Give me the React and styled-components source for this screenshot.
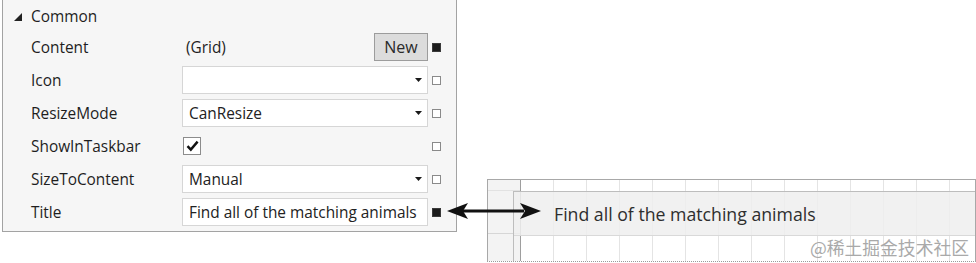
import React from "react";
import styled, { createGlobalStyle } from "styled-components";

const GlobalStyle = createGlobalStyle`
  html, body {
    margin: 0;
    background: #ffffff;
  }
  body {
    font-family: "Open Sans", "Noto Sans", sans-serif;
    color: #1e1e1e;
  }
`;

const properties = [
  { name: "Content", kind: "new", value: "(Grid)", set: true },
  { name: "Icon", kind: "select", value: "", set: false },
  { name: "ResizeMode", kind: "select", value: "CanResize", set: false },
  { name: "ShowInTaskbar", kind: "check", value: true, set: false },
  { name: "SizeToContent", kind: "select", value: "Manual", set: false },
  { name: "Title", kind: "text", value: "Find all of the matching animals", set: true },
];

function DropArrow() {
  return (
    <svg width="7" height="4" viewBox="0 0 7 4">
      <path d="M0 0 H7 L3.5 4 Z" fill="#1a1a1a" />
    </svg>
  );
}

function CheckMark() {
  return (
    <svg width="13" height="12" viewBox="0 0 13 12">
      <path d="M1.5 6.2 L4.8 9.6 L11.6 1.6" fill="none" stroke="#111" strokeWidth="2.4" />
    </svg>
  );
}

function DoubleArrow() {
  return (
    <svg width="100" height="20" viewBox="0 0 100 20">
      <rect x="18" y="8.5" width="62" height="3" fill="#111" />
      <path d="M3 10 L24 2 L19 10 L24 18 Z" fill="#111" />
      <path d="M97 10 L76 2 L81 10 L76 18 Z" fill="#111" />
    </svg>
  );
}

function PropertyValue({ prop }) {
  if (prop.kind === "new") {
    return (
      <ValueLine>
        <PlainValue>{prop.value}</PlainValue>
        <NewButton>New</NewButton>
      </ValueLine>
    );
  }
  if (prop.kind === "check") {
    return (
      <ValueLine>
        <CheckBox>{prop.value && <CheckMark />}</CheckBox>
      </ValueLine>
    );
  }
  return (
    <InputBox>
      <InputText>{prop.value}</InputText>
      {prop.kind === "select" && <DropArrow />}
    </InputBox>
  );
}

export default function App() {
  return (
    <Page>
      <GlobalStyle />
      <PropertyPanel>
        <Header>
          <Collapse />
          Common
        </Header>
        <Rows>
          {properties.map(prop => (
            <Row key={prop.name}>
              <Label>{prop.name}</Label>
              <PropertyValue prop={prop} />
              <Marker $set={prop.set} />
            </Row>
          ))}
        </Rows>
      </PropertyPanel>
      <Canvas>
        <Ruler />
        <Surface />
        <WindowFrame>
          <TitleBar>Find all of the matching animals</TitleBar>
        </WindowFrame>
        <Watermark>@稀土掘金技术社区</Watermark>
      </Canvas>
      <ArrowOverlay>
        <DoubleArrow />
      </ArrowOverlay>
    </Page>
  );
}

const Page = styled.div`
  position: relative;
  width: 976px;
  height: 263px;
  display: flex;
  align-items: flex-start;
  overflow: hidden;
`;

const PropertyPanel = styled.div`
  box-sizing: border-box;
  margin-left: 2px;
  width: 455px;
  height: 232px;
  background: #f6f6f6;
  border: 1px solid #a3a3a3;
  border-top: none;
  font-size: 15.4px;
`;

const Header = styled.div`
  height: 33px;
  display: flex;
  align-items: center;
  gap: 9px;
  padding-left: 11px;
`;

const Collapse = styled.span`
  width: 0;
  height: 0;
  border-left: 8px solid transparent;
  border-bottom: 8px solid #222;
`;

const Rows = styled.div`
  display: flex;
  flex-direction: column;
  gap: 5px;
`;

const Row = styled.div`
  display: grid;
  grid-template-columns: 147px 246px 9px;
  column-gap: 4px;
  align-items: center;
  height: 28px;
  padding-left: 28px;
`;

const Label = styled.span`
  white-space: nowrap;
`;

const ValueLine = styled.div`
  display: flex;
  align-items: center;
  justify-content: space-between;
  height: 100%;
`;

const PlainValue = styled.span`
  padding-left: 4px;
`;

const NewButton = styled.div`
  box-sizing: border-box;
  width: 54px;
  height: 28px;
  display: flex;
  align-items: center;
  justify-content: center;
  background: #dcdcdc;
  border: 1px solid #9c9c9c;
  font-size: 16px;
  color: #2a2a2a;
`;

const CheckBox = styled.div`
  box-sizing: border-box;
  width: 18px;
  height: 18px;
  margin-left: 1px;
  display: flex;
  align-items: center;
  justify-content: center;
  background: #ffffff;
  border: 1px solid #8c8c8c;
`;

const InputBox = styled.div`
  box-sizing: border-box;
  height: 28px;
  display: flex;
  align-items: center;
  justify-content: space-between;
  padding: 0 5px 0 6px;
  background: #ffffff;
  border: 1px solid #d6d6d6;
`;

const InputText = styled.span`
  white-space: nowrap;
  color: #222;
`;

const Marker = styled.span`
  box-sizing: border-box;
  width: 9px;
  height: 9px;
  background: ${p => (p.$set ? "#1c1c1c" : "#ffffff")};
  border: 1px solid ${p => (p.$set ? "#3a3a3a" : "#8a8a8a")};
`;

const Canvas = styled.div`
  box-sizing: border-box;
  margin: 179px 0 0 30px;
  width: 489px;
  height: 83px;
  display: grid;
  grid-template-columns: 25px 7px 1fr;
  grid-template-rows: 11px 44px 1fr;
  border: 1px solid #a8a8a8;
  border-bottom: 1px dotted #9a9a9a;
  background: #ffffff;
`;

const Ruler = styled.div`
  grid-column: 1 / 3;
  grid-row: 1 / -1;
  background:
    linear-gradient(#e2e2e2, #e2e2e2) 0 10px / 100% 1px no-repeat,
    linear-gradient(#d6d6d6, #d6d6d6) 0 53px / 100% 1px no-repeat,
    #f3f3f3;
`;

const Surface = styled.div`
  grid-column: 3;
  grid-row: 1 / -1;
  border-left: 1px solid #9e9e9e;
  background:
    repeating-linear-gradient(
      to right,
      transparent 0 32px,
      #e4e4e4 32px 33px
    ),
    #ffffff;
`;

const WindowFrame = styled.div`
  grid-column: 2 / 4;
  grid-row: 2 / -1;
  border-top: 1px solid #bdbdbd;
  border-left: 1px solid #bdbdbd;
`;

const TitleBar = styled.div`
  height: 43px;
  display: flex;
  align-items: center;
  padding-left: 40px;
  background: rgba(238, 238, 238, 0.85);
  border-bottom: 1px solid #d9d9d9;
  font-size: 17.7px;
  color: #2e2e2e;
  white-space: nowrap;
`;

const Watermark = styled.div`
  grid-column: 3;
  grid-row: 3;
  justify-self: end;
  align-self: center;
  padding-right: 6px;
  font-family: "Noto Sans CJK SC", sans-serif;
  font-size: 17.8px;
  line-height: 1;
  color: #a9a9a9;
  white-space: nowrap;
`;

const ArrowOverlay = styled.div`
  position: absolute;
  left: 444px;
  top: 201px;
  width: 100px;
  height: 20px;
`;
